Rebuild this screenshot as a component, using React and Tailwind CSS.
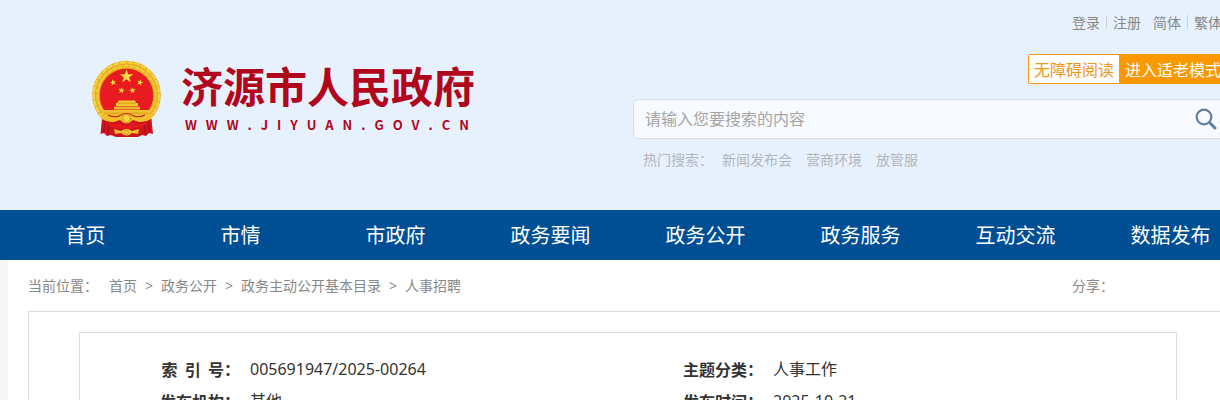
import { Fragment } from "react";

const navItems = [
  "首页",
  "市情",
  "市政府",
  "政务要闻",
  "政务公开",
  "政务服务",
  "互动交流",
  "数据发布",
];

const hotWords = ["新闻发布会", "营商环境", "放管服"];

const crumbs = ["首页", "政务公开", "政务主动公开基本目录", "人事招聘"];

const infoRows = [
  ["索  引  号：", "005691947/2025-00264", "主题分类：", "人事工作"],
  ["发布机构：", "其他", "发布时间：", "2025-10-21"],
];

const STAR =
  "M0 -10 L2.3 -3.1 L9.5 -3.1 L3.7 1.2 L5.9 8.1 L0 3.8 L-5.9 8.1 L-3.7 1.2 L-9.5 -3.1 L-2.3 -3.1 Z";

const Emblem = () => (
  <svg viewBox="0 0 69 77" className="w-[69px] h-[77px] shrink-0" aria-hidden="true">
    {/* wheat ring */}
    <ellipse cx="34.5" cy="35" rx="34.3" ry="34.3" fill="#e3aa25" />
    <circle cx="34.5" cy="35" r="32.6" fill="none" stroke="#f7d33c" strokeWidth="2.2" strokeDasharray="6 1" />
    <circle cx="34.5" cy="35" r="29" fill="none" stroke="#f4cb35" strokeWidth="2.4" strokeDasharray="5 .8" />
    <circle cx="34.5" cy="35.5" r="26.8" fill="#e81c20" />
    <g fill="#fbdc3e">
      <path d={STAR} transform="translate(34.5 16.5) scale(.72)" />
      <path d={STAR} transform="translate(21 22.5) rotate(-15) scale(.34)" />
      <path d={STAR} transform="translate(48 22.5) rotate(15) scale(.34)" />
      <path d={STAR} transform="translate(29.5 30.5) rotate(10) scale(.34)" />
      <path d={STAR} transform="translate(40.5 30.5) rotate(-10) scale(.34)" />
    </g>
    {/* gate tower */}
    <path d="M26.5 40.5 H43 L44 43 H46 V46 H24 V43 H25.5 Z" fill="#f4c830" />
    <path d="M26 43.2 H44" stroke="#c98a17" strokeWidth=".7" />
    <path d="M22 46.5 H48 V49.5 H22 Z" fill="#eab52b" />
    {/* ribbon drapes */}
    <path d="M10 59 L8.5 74 L12 73 L15 76 L19 75 L24 77 H46 L50 75 L54 76 L57 73 L61 74 L59.5 59 Z" fill="#cf151c" />
    <path d="M13 63 L11.5 73 M17 64 L15.5 75 M56 63 L58 73 M52 64 L54 75" stroke="#a00d14" strokeWidth="1" />
    {/* cross beam and gear */}
    <path d="M11 50 H58 L60 58 Q56 62 47 62 L41 60 Q34.5 67 28 60 L22 62 Q13 62 9 58 Z" fill="#f0c02e" />
    <path d="M12 53.2 H57" stroke="#d3961c" strokeWidth=".8" />
    <path d="M16 55 Q22 58 27 56 Q34.5 51 42 56 Q47 58 53 55" stroke="#c02016" strokeWidth="1.1" fill="none" />
    <circle cx="34.5" cy="58.5" r="4" fill="#f7d33c" stroke="#c98a17" strokeWidth="1.4" strokeDasharray="1.2 .8" />
    <path d="M13 62 Q23 66 28 63 Q34.5 69 41 63 Q46 66 56 62 Q49 69 34.5 69 Q20 69 13 62 Z" fill="#e4191e" />
    <path d="M22 69 L29 71 Q34.5 67 40 71 L47 69 L46 74 L40 73 Q34.5 78 29 73 L23 74 Z" fill="#f0c02e" />
    <circle cx="34.5" cy="72.3" r="1.6" fill="#f9dc4a" stroke="#c98a17" strokeWidth=".7" />
  </svg>
);

const Logo = () => (
  <a href="#" className="flex gap-5 pt-[60px] pl-[84px] text-[#b0071c]">
    <Emblem />
    <div className="w-[292px]">
      <div className="text-[42px] leading-[50px] font-bold whitespace-nowrap">
        济源市人民政府
      </div>
      <div className="flex justify-between px-1 text-[13px] leading-[30px] font-bold">
        {"WWW.JIYUAN.GOV.CN".split("").map((letter, i) => (
          <span key={i}>{letter}</span>
        ))}
      </div>
    </div>
  </a>
);

const Divider = () => <span className="w-px h-3.5 bg-[#cdd3da] mx-1.5" />;

const Header = () => (
  <header className="bg-[#e7f1fe] pl-2">
    <div className="min-w-[1240px] flex justify-between pr-5 pb-[31px] font-['Noto_Sans_CJK_SC',sans-serif]">
      <Logo />
      <div className="w-[595px]">
        <div className="h-11 flex items-center justify-end pr-1.5 text-sm text-[#888]">
          <a href="#">登录</a>
          <Divider />
          <a href="#">注册</a>
          <a href="#" className="ml-3">
            简体
          </a>
          <Divider />
          <a href="#">繁体</a>
        </div>
        <div className="mt-2.5 flex justify-end">
          <div className="flex h-[30px] rounded-xs border border-[#f59a0c] overflow-hidden text-base leading-7">
            <button className="pb-0.5 px-[5px] bg-white text-[#f0951a]">无障碍阅读</button>
            <button className="pb-0.5 px-1.5 bg-[#fb9800] text-white">进入适老模式</button>
          </div>
        </div>
        <form
          className="mt-[15px] h-10 flex items-center rounded-md border border-[#d6dee7] bg-[#f7fbff] pl-[11px] pr-2.5"
          onSubmit={(e) => e.preventDefault()}
        >
          <input
            type="text"
            aria-label="搜索"
            placeholder="请输入您要搜索的内容"
            className="flex-1 h-full pb-0.5 bg-transparent text-base outline-none placeholder:text-[#a5a5a5]"
          />
          <button type="submit" aria-label="搜索">
            <svg viewBox="0 0 22 22" className="w-[22px] h-[22px]" fill="none" stroke="#64809f">
              <circle cx="9" cy="9" r="7.3" strokeWidth="2.2" />
              <path d="M14.5 14.5 L20 20" strokeWidth="3" strokeLinecap="round" />
            </svg>
          </button>
        </form>
        <div className="h-10 flex items-center gap-3.5 pl-2.5 text-sm text-[#b3b6ba]">
          <span className="-mr-[5px]">热门搜索：</span>
          {hotWords.map((word) => (
            <a key={word} href="#">
              {word}
            </a>
          ))}
        </div>
      </div>
    </div>
  </header>
);

const Nav = () => (
  <nav className="bg-[#004e94] pl-2">
    <ul className="min-w-[1240px] grid grid-cols-8">
      {navItems.map((item) => (
        <li key={item}>
          <a href="#" className="block h-[50px] text-center text-xl leading-[52px] text-white">
            {item}
          </a>
        </li>
      ))}
    </ul>
  </nav>
);

const InfoTable = () => (
  <table className="w-full table-fixed text-base text-[#333]">
    <colgroup>
      <col className="w-40" />
      <col className="w-[363px]" />
      <col className="w-40" />
      <col />
    </colgroup>
    <tbody>
      {infoRows.map((row) => (
        <tr key={row[0]} className="h-8">
          {row.map((cell, i) =>
            i % 2 === 0 ? (
              <th
                key={i}
                scope="row"
                className="text-right font-bold whitespace-pre font-['Noto_Sans_CJK_SC',sans-serif]"
              >
                {cell}
              </th>
            ) : (
              <td key={i} className="pl-2.5">
                {cell}
              </td>
            )
          )}
        </tr>
      ))}
    </tbody>
  </table>
);

export default function App() {
  return (
    <div
      lang="zh-CN"
      className="h-screen overflow-x-hidden overflow-y-auto bg-[#f7f7f7] font-['Noto_Sans','Noto_Sans_CJK_SC',sans-serif] [scrollbar-width:none]"
    >
      <Header />
      <Nav />
      <div className="pl-2">
        <main className="min-w-[1240px] bg-white px-5">
          <div className="flex justify-between text-sm leading-[51px] text-[#888]">
            <div className="flex gap-2">
              <span className="mr-[3px]">当前位置：</span>
              {crumbs.map((crumb, i) => (
                <Fragment key={crumb}>
                  {i > 0 && <span>&gt;</span>}
                  <a href="#">{crumb}</a>
                </Fragment>
              ))}
            </div>
            <div className="w-[156px]">分享：</div>
          </div>
          <div className="border border-[#dcdcdc] px-[50px] py-5">
            <div className="border border-[#dcdcdc] py-5">
              <InfoTable />
            </div>
          </div>
        </main>
      </div>
    </div>
  );
}
